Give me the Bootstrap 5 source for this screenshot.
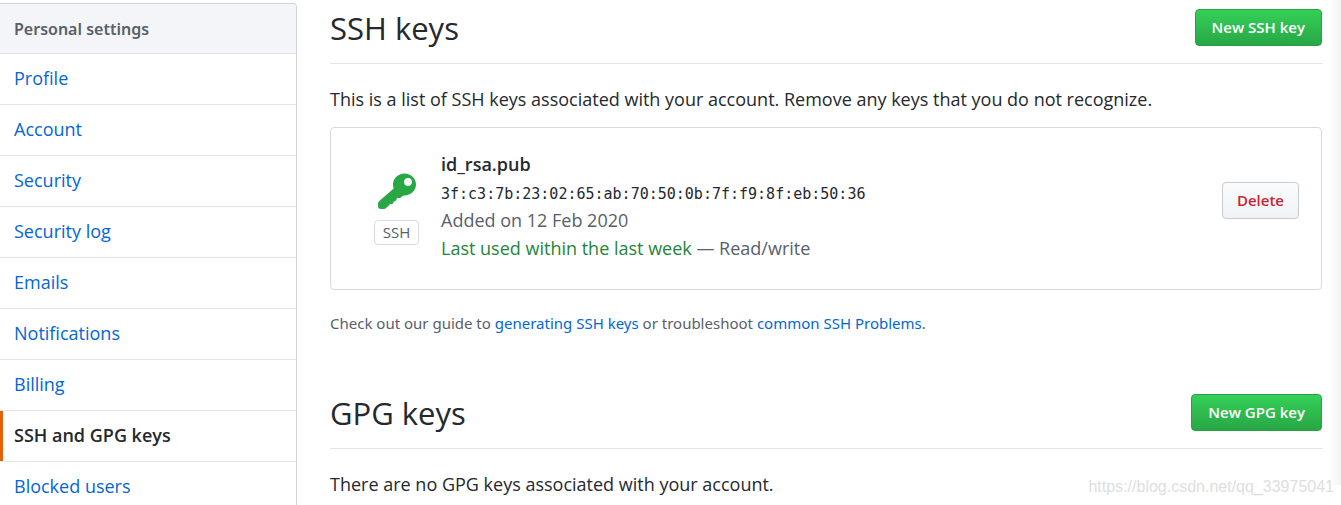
<!DOCTYPE html>
<html lang="en">
<head>
<meta charset="utf-8">
<meta name="viewport" content="width=device-width, initial-scale=1">
<title>SSH and GPG keys</title>
<link href="https://cdn.jsdelivr.net/npm/bootstrap@5.3.0/dist/css/bootstrap.min.css" rel="stylesheet">
<style>
  body { font-family: "Open Sans", "Noto Sans", sans-serif; font-size: 18px; line-height: 28px; color: #24292e; background: #fff; }
  a { color: #0366d6; text-decoration: none; }
  a:hover { text-decoration: underline; }
  .page-shell { height: 100vh; gap: 33px; padding-right: 19px; }
  .settings-menu { width: 297px; margin-top: 3px; border: 1px solid #d1d5da; border-left: 0; border-radius: 0 4px 0 0; align-self: flex-start; }
  .settings-menu .list-group-item { border: 0; border-bottom: 1px solid #e1e4e8; border-radius: 0; padding: 10px 14px 12px; color: #0366d6; background: #fff; }
  .settings-menu .menu-heading { font-family: "Noto Sans", sans-serif; font-size: 16px; font-weight: 600; color: #586069; background: #f3f5f8; margin: 0; padding: 12px 14px 10px; line-height: 27px; border-top-right-radius: 3px; }
  .settings-menu .list-group-item.active { color: #24292e; font-weight: 600; box-shadow: inset 3px 0 #e36209; margin: 0; }
  .section-head { height: 64px; border-bottom: 1px solid #e1e4e8; padding-bottom: 8px; }
  .section-head h2 { font-size: 31px; line-height: 40px; font-weight: 400; margin: 0; }
  .section-text { margin: 21px 0 14px; }
  .btn-key { font-size: 15px; font-weight: 600; line-height: 23px; padding: 6px 14px; border-radius: 4px; }
  .btn-new, .btn-new:hover { color: #fff; border-color: #28a043; background: linear-gradient(#34d058, #28a745); padding-left: 16px; padding-right: 16px; }
  .btn-remove, .btn-remove:hover { color: #cb2431; border-color: #c8ccd1; background: linear-gradient(#fafbfc, #eff3f6); }
  .key-card { border: 1px solid #d7dade; border-radius: 4px; padding: 22px 22px 27px 43px; }
  .key-type { width: 45px; margin-right: 22px; padding-top: 20px; }
  .key-label { font-size: 15px; line-height: 23px; color: #586069; border: 1px solid #d8dbdf; border-radius: 4px; margin-top: 10px; }
  .key-print { font-family: "DejaVu Sans Mono", monospace; font-size: 15px; line-height: 24px; padding-top: 4px; color: #24292e; }
  .soft { color: #586069; }
  .recent { color: #22863a; }
  .btn-remove { margin-top: 32px; }
  .guide { font-family: "Noto Sans", sans-serif; font-size: 15px; line-height: 24px; margin: 21px 0 50px; }
  .edge-shade { top: 0; right: 0; bottom: 20px; width: 12px; background: linear-gradient(to right, #fff0, #f3f3f3); }
  .site-mark { right: 7px; bottom: 7px; font-family: "Liberation Sans", Arial, sans-serif; font-size: 16px; line-height: 22px; color: #dedede; }
</style>
</head>
<body>
<div class="page-shell d-flex position-relative overflow-hidden">
  <nav class="settings-menu list-group flex-shrink-0" aria-label="Personal settings">
    <h1 class="list-group-item menu-heading">Personal settings</h1>
    <a class="list-group-item" href="#">Profile</a>
    <a class="list-group-item" href="#">Account</a>
    <a class="list-group-item" href="#">Security</a>
    <a class="list-group-item" href="#">Security log</a>
    <a class="list-group-item" href="#">Emails</a>
    <a class="list-group-item" href="#">Notifications</a>
    <a class="list-group-item" href="#">Billing</a>
    <a class="list-group-item active" href="#" aria-current="page">SSH and GPG keys</a>
    <a class="list-group-item" href="#">Blocked users</a>
  </nav>
  <main class="flex-grow-1">
    <section>
      <div class="section-head d-flex align-items-center justify-content-between">
        <h2>SSH keys</h2>
        <button type="button" class="btn btn-key btn-new">New SSH key</button>
      </div>
      <p class="section-text">This is a list of SSH keys associated with your account. Remove any keys that you do not recognize.</p>
      <div class="key-card d-flex align-items-start">
        <div class="key-type d-flex flex-column">
          <svg class="align-self-center" width="40" height="40" viewBox="0 0 40 40" aria-hidden="true">
            <path fill="#28a745" fill-rule="evenodd" d="M27.500 3.500C21 3.500 16 8.500 16 14.500C16 16 16.300 17.400 16.700 18.500L2.300 31Q1 32.300 1 34V36Q1 39 4 39H7Q9 39 10 37L11.500 36L13 34H15.500L17 31.500L19 30.500L20 28H23L26.500 25.500C33.500 26 39 20.500 39 14.500C39 8.500 34 3.500 27.500 3.500ZM31 8A3.900 3.900 0 1 1 31 15.800A3.900 3.900 0 1 1 31 8Z"/>
          </svg>
          <span class="key-label text-center">SSH</span>
        </div>
        <div class="flex-grow-1">
          <strong class="d-block fw-semibold">id_rsa.pub</strong>
          <code class="key-print d-block">3f:c3:7b:23:02:65:ab:70:50:0b:7f:f9:8f:eb:50:36</code>
          <span class="soft d-block">Added on 12 Feb 2020</span>
          <span class="soft d-block"><span class="recent">Last used within the last week</span> — Read/write</span>
        </div>
        <button type="button" class="btn btn-key btn-remove">Delete</button>
      </div>
      <p class="guide soft">Check out our guide to <a href="#">generating SSH keys</a> or troubleshoot <a href="#">common SSH Problems</a>.</p>
    </section>
    <section>
      <div class="section-head d-flex align-items-center justify-content-between">
        <h2>GPG keys</h2>
        <button type="button" class="btn btn-key btn-new">New GPG key</button>
      </div>
      <p class="section-text">There are no GPG keys associated with your account.</p>
    </section>
  </main>
  <div class="edge-shade position-absolute"></div>
  <span class="site-mark position-absolute">https://blog.csdn.net/qq_33975041</span>
</div>
<script src="https://cdn.jsdelivr.net/npm/bootstrap@5.3.0/dist/js/bootstrap.bundle.min.js"></script>
</body>
</html>
